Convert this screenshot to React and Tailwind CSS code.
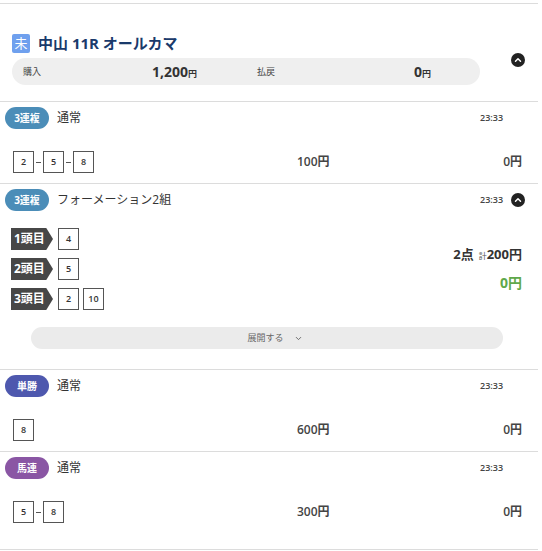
import React from "react";
import { ChevronUp, ChevronDown } from "lucide-react";

const FONT = "font-['Open_Sans','Noto_Sans_CJK_JP',sans-serif]";

const Badge = ({ label, color }) => (
  <div
    className={`w-[44px] h-[22px] rounded-full flex items-center justify-center text-[10px] font-bold text-white ${color}`}
  >
    {label}
  </div>
);

const CircleChevron = () => (
  <div className="w-[14px] h-[14px] rounded-full bg-[#222] flex items-center justify-center">
    <ChevronUp size={10} strokeWidth={3.5} className="text-white" />
  </div>
);

const NumBox = ({ n }) => (
  <div className="w-[21px] h-[22px] border border-[#555] flex items-center justify-center text-[9px] font-semibold text-[#333]">
    {n}
  </div>
);

const Numbers = ({ nums }) => (
  <div className="flex items-center">
    {nums.map((n, i) => (
      <React.Fragment key={i}>
        {i > 0 && <div className="w-[9px] flex justify-center"><div className="w-[5px] h-px bg-[#555]" /></div>}
        <NumBox n={n} />
      </React.Fragment>
    ))}
  </div>
);

const RowHead = ({ label, color, type, chevron }) => (
  <div className="flex items-center h-[22px]">
    <div className="pl-[5px]">
      <Badge label={label} color={color} />
    </div>
    <span className="ml-[8px] text-[12px] text-[#333]">{type}</span>
    <div className="ml-auto flex items-center gap-[8px] pr-[13px]">
      <span className="text-[9px] font-semibold text-[#444] w-[23px]">23:33</span>
      <div className="w-[14px]">{chevron && <CircleChevron />}</div>
    </div>
  </div>
);

const SimpleRow = ({ label, color, nums, amount, pb }) => (
  <div className={`border-t border-[#dcdcdc] pt-[5px] ${pb}`}>
    <RowHead label={label} color={color} type="通常" />
    <div className="flex items-center mt-[22px]">
      <div className="pl-[13px] w-[297px]">
        <Numbers nums={nums} />
      </div>
      <span className="text-[12px] font-semibold text-[#444]">{amount}</span>
      <span className="ml-auto pr-[16px] text-[12px] font-semibold text-[#444]">0円</span>
    </div>
  </div>
);

const Tag = ({ label }) => (
  <div className="w-[42px] h-[22px] bg-[#474747] text-white text-[12px] font-bold flex items-center pl-[3px] [clip-path:polygon(0_0,84%_0,100%_50%,84%_100%,0_100%)]">
    {label}
  </div>
);

export default function App() {
  return (
    <div className={`w-[542px] min-h-[551px] bg-white ${FONT}`}>
      <div className="w-[538px] mt-[3px] border-t border-[#dcdcdc]">
        {/* Header */}
        <div className="flex items-start pl-[12px] pt-[30px] pb-[16px]">
          <div className="w-[468px]">
            <div className="flex items-center h-[19px]">
              <div className="w-[18px] h-[19px] bg-[#6fa0ee] rounded-[2px] text-white text-[13px] flex items-center justify-center">
                未
              </div>
              <span className="ml-[8px] text-[15px] font-bold text-[#1a3a6b]">中山 11R オールカマ</span>
            </div>
            <div className="mt-[5px] h-[27px] rounded-full bg-[#efefef] flex items-center pl-[11px] gap-[60px]">
              <div className="w-[174px] flex items-center justify-between">
                <span className="text-[9px] text-[#444]">購入</span>
                <span className="text-[14px] font-bold text-[#333]">
                  1,200<span className="text-[9px]">円</span>
                </span>
              </div>
              <div className="w-[174px] flex items-center justify-between">
                <span className="text-[9px] text-[#444]">払戻</span>
                <span className="text-[14px] font-bold text-[#333]">
                  0<span className="text-[9px]">円</span>
                </span>
              </div>
            </div>
          </div>
          <div className="ml-[31px] mt-[19px]">
            <CircleChevron />
          </div>
        </div>

        <SimpleRow label="3連複" color="bg-[#4b8db8]" nums={[2, 5, 8]} amount="100円" pb="pb-[10px]" />

        {/* Formation */}
        <div className="border-t border-[#dcdcdc] pt-[5px] pb-[20px]">
          <RowHead label="3連複" color="bg-[#4b8db8]" type="フォーメーション2組" chevron />
          <div className="flex items-center mt-[17px] pl-[11px] pr-[16px]">
            <div className="flex flex-col gap-[8px]">
              {[
                ["1頭目", [4]],
                ["2頭目", [5]],
                ["3頭目", [2, 10]],
              ].map(([t, ns]) => (
                <div key={t} className="flex items-center gap-[5px]">
                  <Tag label={t} />
                  <div className="flex gap-[4px]">
                    {ns.map((n) => (
                      <NumBox key={n} n={n} />
                    ))}
                  </div>
                </div>
              ))}
            </div>
            <div className="ml-auto flex flex-col items-end gap-[7px]">
              <div className="flex items-baseline whitespace-nowrap text-[13px] font-bold text-[#333]">
                <span>2点</span>
                <span className="ml-[5px] text-[8px] leading-none font-normal text-[#555] whitespace-nowrap">計</span>
                <span>200円</span>
              </div>
              <div className="text-[14px] font-bold text-[#5fa84a]">0円</div>
            </div>
          </div>
          <div className="mt-[17px] ml-[31px] w-[472px] h-[22px] rounded-full bg-[#ebebeb] flex items-center justify-center gap-[10px] pl-[16px]">
            <span className="text-[9px] text-[#666]">展開する</span>
            <ChevronDown size={9} strokeWidth={2.5} className="text-[#666]" />
          </div>
        </div>

        <SimpleRow label="単勝" color="bg-[#4e58ae]" nums={[8]} amount="600円" pb="pb-[10px]" />
        <SimpleRow label="馬連" color="bg-[#8a56a4]" nums={[5, 8]} amount="300円" pb="pb-[26px]" />
        <div className="border-t border-[#dcdcdc]" />
      </div>
    </div>
  );
}
